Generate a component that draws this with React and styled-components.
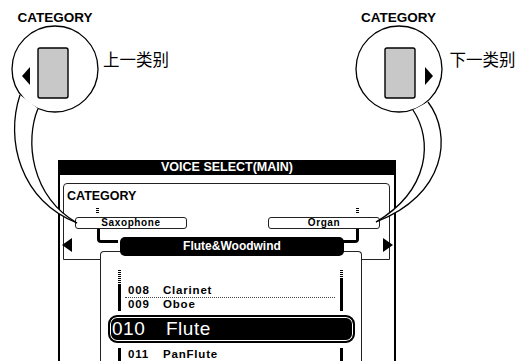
import React from 'react';
import styled, { createGlobalStyle } from 'styled-components';

const GlobalStyle = createGlobalStyle`
  html, body {
    margin: 0;
    padding: 0;
    background: #fff;
  }
  body {
    font-family: "Liberation Sans", Arial, sans-serif;
  }
`;

const Page = styled.div`
  width: 522px;
  height: 361px;
  overflow: hidden;
  background: #fff;
  color: #000;
  display: flex;
  flex-direction: column;
`;

const Top = styled.div`
  height: 160px;
  flex-shrink: 0;
  box-sizing: border-box;
  padding: 10px 0 0 11px;
  display: flex;
  gap: 176px;
`;

const Callout = styled.div`
  width: 170px;
  display: flex;
  align-items: flex-start;
`;

const KeyColumn = styled.div`
  width: 88px;
  display: flex;
  flex-direction: column;
  align-items: center;
`;

const KeyLabel = styled.div`
  font-size: 13.5px;
  font-weight: bold;
  line-height: 15px;
  white-space: nowrap;
`;

const Drawing = styled.svg`
  display: block;
  overflow: visible;
  position: relative;
  z-index: 2;
`;

const SideText = styled.div`
  margin: 41px 0 0 ${(p) => p.$gap}px;
  font-family: "Noto Sans CJK SC", sans-serif;
  font-size: 16.5px;
  line-height: 17px;
  white-space: nowrap;
`;

const Lcd = styled.div`
  margin-left: 58px;
  width: 338px;
  flex: 1;
  box-sizing: border-box;
  border-left: 2px solid #000;
  border-right: 2px solid #000;
  display: flex;
  flex-direction: column;
  font-weight: bold;
`;

const LcdTitle = styled.div`
  height: 15px;
  margin: 0 -2px;
  background: #000;
  color: #fff;
  font-size: 12.5px;
  line-height: 15px;
  text-align: center;
`;

const LcdBody = styled.div`
  flex: 1;
  padding: 8px 4px 0 3px;
  display: flex;
  flex-direction: column;
`;

const CategoryPanel = styled.div`
  border: 1px solid #222;
  border-radius: 4px 4px 0 0;
  padding-top: 5px;
  display: flex;
  flex-direction: column;
`;

const PanelTitle = styled.div`
  padding-left: 3px;
  font-size: 12.5px;
  line-height: 14px;
`;

const SlotRow = styled.div`
  margin-top: 5px;
  padding: 0 9px 0 11px;
  display: flex;
  justify-content: space-between;
`;

const Slot = styled.div`
  width: 112px;
  display: flex;
  flex-direction: column;
`;

const Tick = styled.div`
  width: 3px;
  height: 6px;
  margin: 0 0 3px ${(p) => p.$offset}px;
  background: repeating-linear-gradient(#000 0 1px, #fff 1px 2px);
`;

const SlotBox = styled.div`
  height: 12px;
  box-sizing: border-box;
  border: 1px solid #222;
  border-radius: 3px;
  font-size: 10px;
  line-height: 10px;
  letter-spacing: 0.6px;
  text-align: center;
`;

const LinkRow = styled.div`
  height: 30px;
  display: flex;
  align-items: flex-start;
`;

const Arrow = styled.div`
  width: 0;
  height: 0;
  margin-top: 9px;
  border-top: 7.5px solid transparent;
  border-bottom: 7.5px solid transparent;
  ${(p) =>
    p.$dir === 'left'
      ? 'border-right: 10px solid #000; margin-left: -2px;'
      : 'border-left: 10px solid #000; margin-left: 24px; margin-right: -4px;'}
`;

const Link = styled.div`
  width: ${(p) => (p.$dir === 'left' ? 21 : 20)}px;
  height: 14px;
  box-sizing: border-box;
  border-bottom: 3px solid #000;
  ${(p) =>
    p.$dir === 'left'
      ? 'border-left: 3px solid #000; border-bottom-left-radius: 4px; margin-left: 25px;'
      : 'border-right: 3px solid #000; border-bottom-right-radius: 4px; margin-left: auto;'}
`;

const VoicePanel = styled.div`
  flex: 1;
  width: 262px;
  box-sizing: border-box;
  margin: -9px 0 0 37px;
  border: 1px solid #222;
  border-bottom: none;
  border-radius: 4px 4px 0 0;
  background: #fff;
  display: flex;
  flex-direction: column;
`;

const CategoryBar = styled.div`
  height: 19px;
  margin: -15px 17px 0 19px;
  border-radius: 5px;
  background: #000;
  color: #fff;
  font-size: 12px;
  line-height: 19px;
  text-align: center;
`;

const ScrollGroup = styled.div`
  margin: ${(p) => p.$top}px 18px 0 17px;
  ${(p) => (p.$grow ? 'flex: 1;' : '')}
  display: grid;
  grid-template-columns: 3px 1fr 3px;
`;

const ScrollBar = styled.div`
  background: repeating-linear-gradient(#000 0 1px, #fff 1px 2px) 0 0 / 100%
      ${(p) => p.$dither}px no-repeat,
    #000;
`;

const RowList = styled.div`
  padding-top: ${(p) => p.$pad}px;
`;

const VoiceRow = styled.div`
  height: 13px;
  margin: 0 5px 0 4px;
  padding-left: 3px;
  display: grid;
  grid-template-columns: 35px auto;
  font-size: 11.5px;
  line-height: 13px;
  letter-spacing: 0.8px;
  ${(p) => (p.$underline ? 'border-bottom: 1px dotted #444;' : '')}
`;

const SelectedRow = styled.div`
  height: 28px;
  box-sizing: border-box;
  margin: 4px 6px 0 7px;
  padding-left: 2px;
  border: 2px solid #000;
  border-radius: 9px;
  background: #000;
  box-shadow: inset 0 0 0 1px #fff;
  color: #fff;
  display: grid;
  grid-template-columns: 54px auto;
  font-weight: normal;
  font-size: 19px;
  line-height: 24px;
  letter-spacing: 0.5px;
`;

const KeyCallout = ({ x, text, gap, keyX, arrow, outer, inner, fill }) => (
  <Callout>
    <KeyColumn>
      <KeyLabel>CATEGORY</KeyLabel>
      <Drawing width="88" height="88" viewBox={`${x} 25 88 88`}>
        <circle cx={x + 44} cy="69" r="43" fill="#fff" stroke="#000" strokeWidth="1.3" />
        <rect x={keyX} y="48" width="30" height="50" rx="2" fill="#c8c8c8" stroke="#000" strokeWidth="1.4" />
        <polygon points={arrow} fill="#000" />
        <path d={fill} fill="#fff" />
        <path d={outer} fill="none" stroke="#000" strokeWidth="1.3" />
        <path d={inner} fill="none" stroke="#000" strokeWidth="1.3" />
      </Drawing>
    </KeyColumn>
    <SideText $gap={gap}>{text}</SideText>
  </Callout>
);

const voices = [
  { no: '008', name: 'Clarinet', underline: true },
  { no: '009', name: 'Oboe' },
];

export default function App() {
  return (
    <Page>
      <GlobalStyle />
      <Top>
        <KeyCallout
          x={11}
          text="上一类别"
          gap={4}
          keyX={38}
          arrow="22,76 30,67 30,85"
          outer="M20 95 C5 140 20 200 77 223"
          inner="M38 108.5 C25 140 30 195 77 223"
          fill="M20 95 C5 140 20 200 77 223 C30 195 25 140 38 108.5 Z"
        />
        <KeyCallout
          x={357}
          text="下一类别"
          gap={7}
          keyX={387}
          arrow="435,76 427,67 427,85"
          outer="M430 102 C455 135 448 195 378 222"
          inner="M415 110 C435 140 432 190 378 222"
          fill="M430 102 C455 135 448 195 378 222 C432 190 435 140 415 110 Z"
        />
      </Top>

      <Lcd>
        <LcdTitle>VOICE SELECT(MAIN)</LcdTitle>
        <LcdBody>
          <CategoryPanel>
            <PanelTitle>CATEGORY</PanelTitle>
            <SlotRow>
              <Slot>
                <Tick $offset={21} />
                <SlotBox>Saxophone</SlotBox>
              </Slot>
              <Slot>
                <Tick $offset={88} />
                <SlotBox>Organ</SlotBox>
              </Slot>
            </SlotRow>
            <LinkRow>
              <Arrow $dir="left" />
              <Link $dir="left" />
              <Link $dir="right" />
              <Arrow $dir="right" />
            </LinkRow>
          </CategoryPanel>

          <VoicePanel>
            <CategoryBar>Flute&amp;Woodwind</CategoryBar>
            <ScrollGroup $top={14}>
              <ScrollBar $dither={14} />
              <RowList $pad={14}>
                {voices.map((v) => (
                  <VoiceRow key={v.no} $underline={v.underline}>
                    <span>{v.no}</span>
                    <span>{v.name}</span>
                  </VoiceRow>
                ))}
              </RowList>
              <ScrollBar $dither={8} />
            </ScrollGroup>
            <SelectedRow>
              <span>010</span>
              <span>Flute</span>
            </SelectedRow>
            <ScrollGroup $top={5} $grow>
              <ScrollBar $dither={0} />
              <RowList $pad={0}>
                <VoiceRow>
                  <span>011</span>
                  <span>PanFlute</span>
                </VoiceRow>
              </RowList>
              <ScrollBar $dither={0} />
            </ScrollGroup>
          </VoicePanel>
        </LcdBody>
      </Lcd>
    </Page>
  );
}
